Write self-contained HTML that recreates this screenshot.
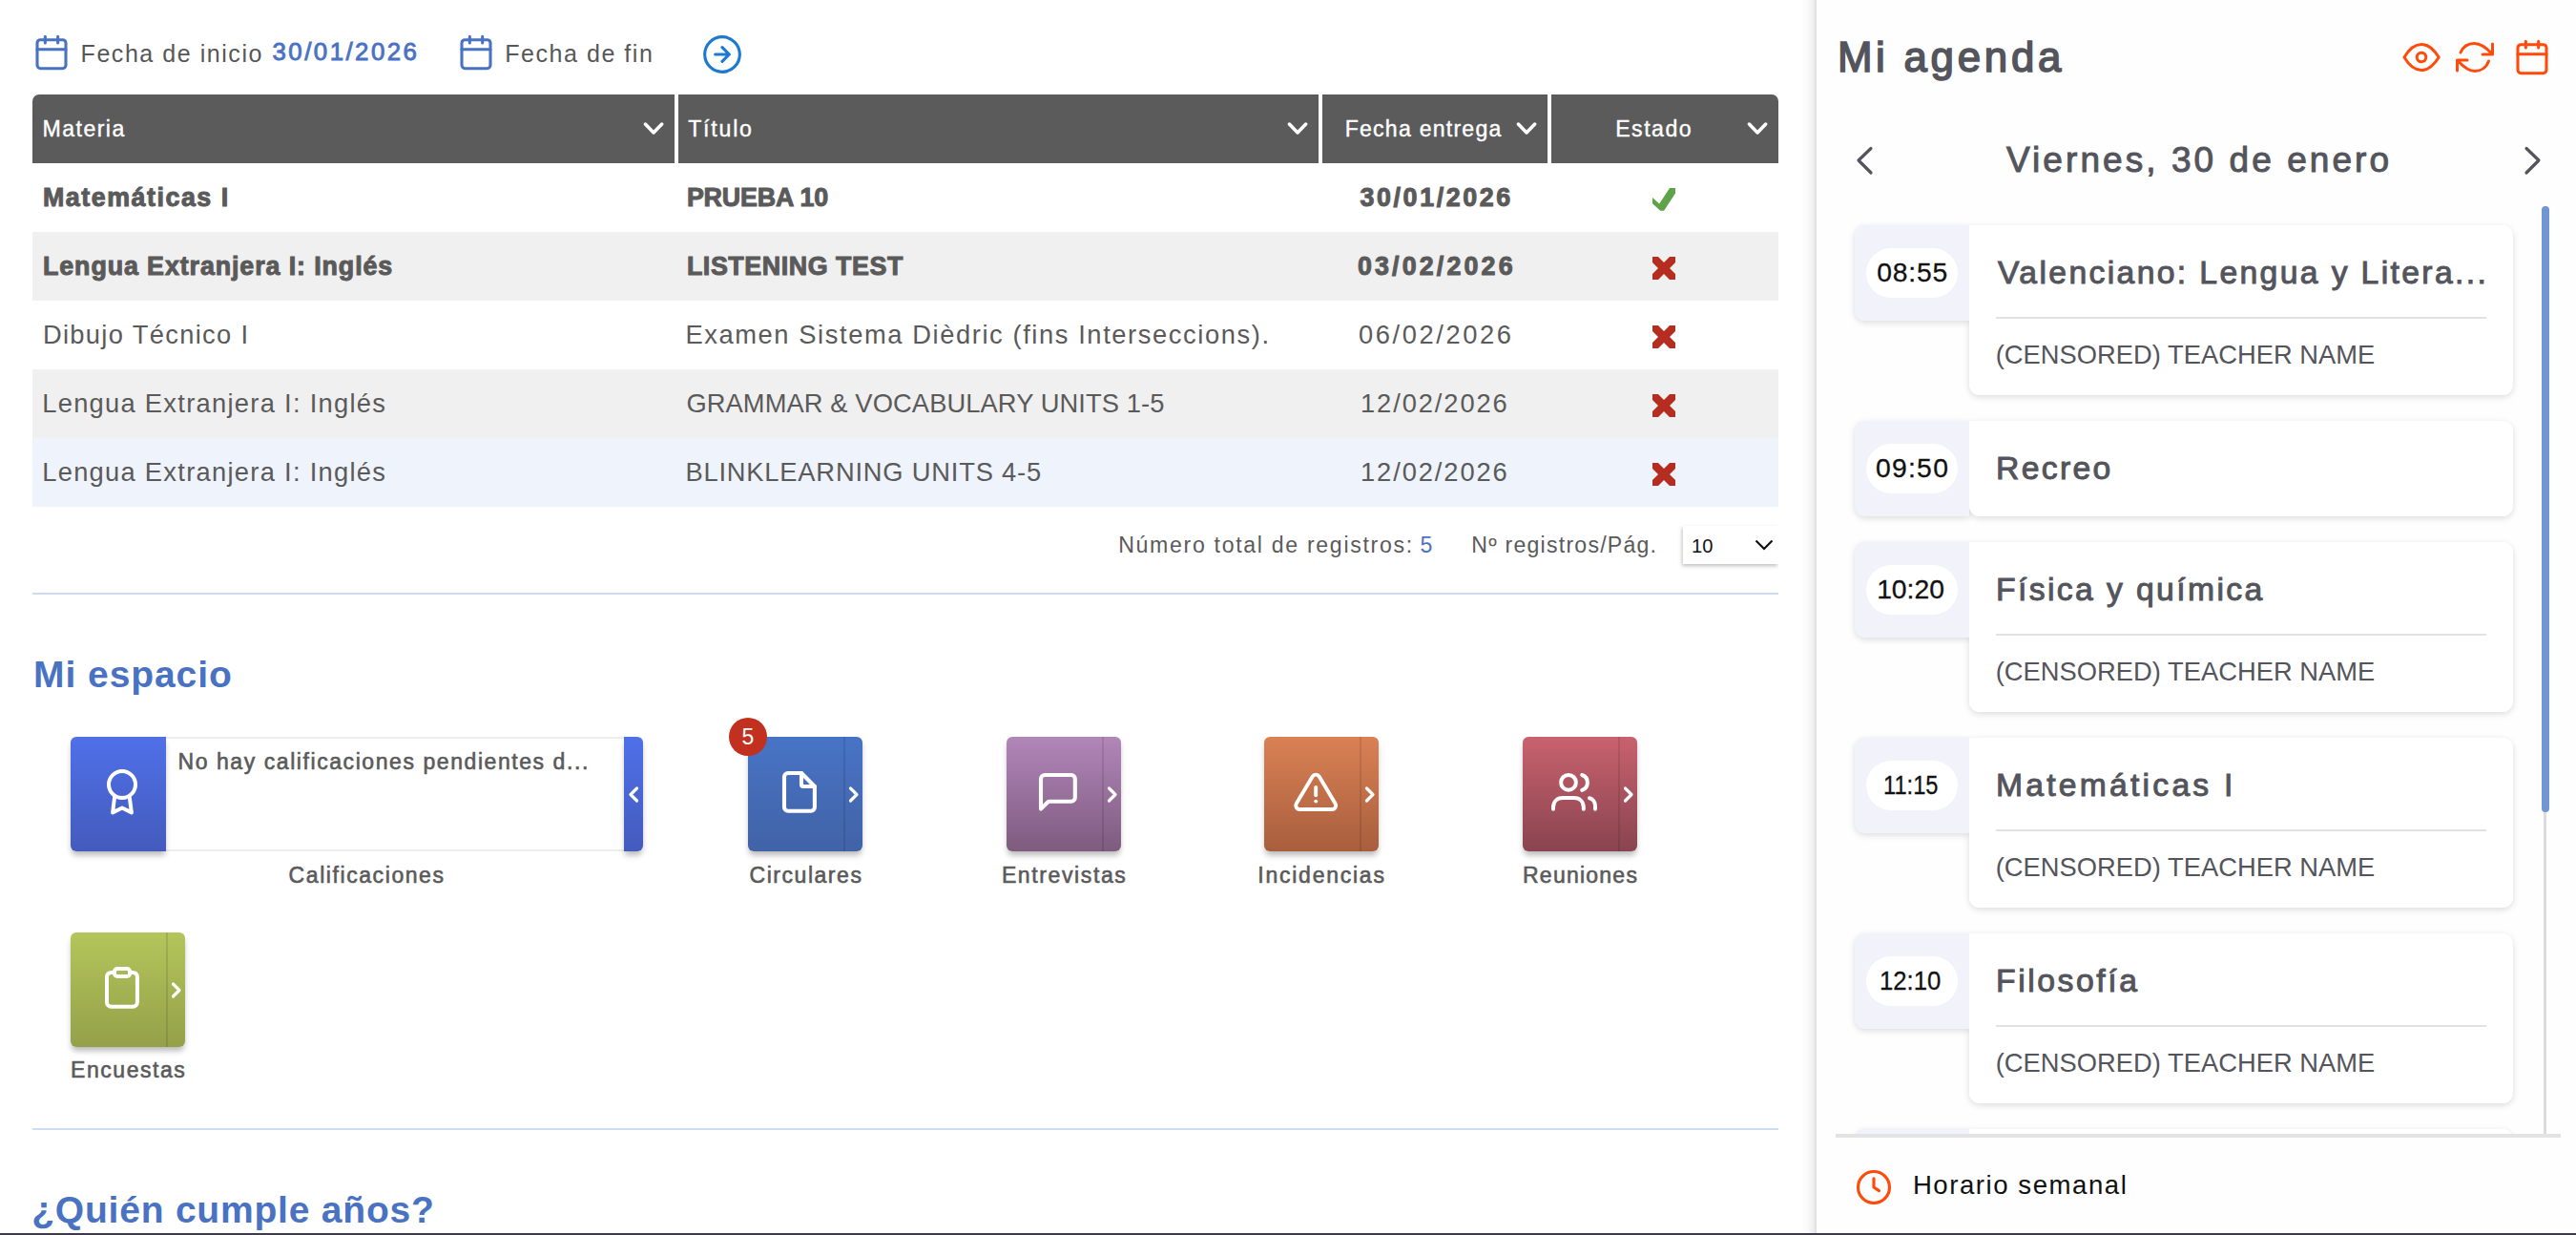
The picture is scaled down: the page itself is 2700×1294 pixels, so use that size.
<!DOCTYPE html>
<html><head><meta charset="utf-8">
<style>
html,body{margin:0;padding:0;}
body{width:2700px;height:1294px;overflow:hidden;position:relative;background:#fff;font-family:"Liberation Sans",sans-serif;}
.a{position:absolute;}
.t{position:absolute;line-height:1;white-space:nowrap;}
svg{position:absolute;overflow:visible;}
.hd{position:absolute;top:99px;height:72px;background:#5b5b5b;}
.row{position:absolute;left:34px;width:1830px;height:72px;}
.tile{position:absolute;width:120px;height:120px;border-radius:6px;box-shadow:0 5px 6px -1px rgba(0,0,0,0.28);overflow:hidden;}
.tile .dv{position:absolute;left:100px;top:0;width:1.5px;height:120px;background:rgba(0,0,0,0.10);}
.card{position:absolute;left:2064px;width:570px;background:#fff;border-radius:0 11px 11px 11px;box-shadow:0 2px 7px rgba(0,0,0,0.14);}
.tbox{position:absolute;left:1944px;width:120px;height:100px;background:#f1f2fa;border-radius:11px 0 0 11px;box-shadow:0 2px 7px rgba(0,0,0,0.14);}
.pill{position:absolute;left:1956px;width:96px;height:52px;background:#fff;border-radius:26px;}
.sep{position:absolute;left:2092px;width:514px;height:2px;background:#e2e2e5;}
</style></head><body>

<!-- top bar icons -->
<svg style="left:34px;top:35px" width="40" height="40" viewBox="0 0 24 24" fill="none" stroke="#4a72c2" stroke-width="1.85" stroke-linecap="round" stroke-linejoin="round"><rect x="3" y="4" width="18" height="18" rx="2"/><path d="M16 2v4M8 2v4M3 10h18"/></svg>
<svg style="left:479px;top:35px" width="40" height="40" viewBox="0 0 24 24" fill="none" stroke="#4a72c2" stroke-width="1.85" stroke-linecap="round" stroke-linejoin="round"><rect x="3" y="4" width="18" height="18" rx="2"/><path d="M16 2v4M8 2v4M3 10h18"/></svg>
<svg style="left:735px;top:35px" width="44" height="44" viewBox="0 0 24 24" fill="none" stroke="#1b7ad0" stroke-width="1.7" stroke-linecap="round" stroke-linejoin="round"><circle cx="12" cy="12" r="10"/><path d="M8 12h8M12 16l4-4-4-4"/></svg>

<!-- table header -->
<div class="hd" style="left:34px;width:673px;border-top-left-radius:7px"></div>
<div class="hd" style="left:711px;width:671px"></div>
<div class="hd" style="left:1386px;width:236px"></div>
<div class="hd" style="left:1626px;width:238px;border-top-right-radius:7px"></div>
<svg style="left:674px;top:126px" width="22" height="16" viewBox="0 0 22 16" fill="none" stroke="#fff" stroke-width="3.6" stroke-linecap="round" stroke-linejoin="round"><path d="M2.4 4.1L11.05 12.9L19.7 4.1"/></svg>
<svg style="left:1348.8px;top:126px" width="22" height="16" viewBox="0 0 22 16" fill="none" stroke="#fff" stroke-width="3.6" stroke-linecap="round" stroke-linejoin="round"><path d="M2.4 4.1L11.05 12.9L19.7 4.1"/></svg>
<svg style="left:1589.1px;top:126px" width="22" height="16" viewBox="0 0 22 16" fill="none" stroke="#fff" stroke-width="3.6" stroke-linecap="round" stroke-linejoin="round"><path d="M2.4 4.1L11.05 12.9L19.7 4.1"/></svg>
<svg style="left:1830.9px;top:126px" width="22" height="16" viewBox="0 0 22 16" fill="none" stroke="#fff" stroke-width="3.6" stroke-linecap="round" stroke-linejoin="round"><path d="M2.4 4.1L11.05 12.9L19.7 4.1"/></svg>

<!-- rows -->
<div class="row" style="top:243px;background:#f0f0f0"></div>
<div class="row" style="top:387px;background:#f0f0f0"></div>
<div class="row" style="top:459px;background:#eef3fc"></div>

<!-- status marks -->
<svg style="left:1728px;top:192px" width="32" height="32" viewBox="0 0 32 32"><path fill="#5fa348" d="M4 15L11.2 21.6L22 4.9H28V10.4L16.1 28.8H12.2L4 21.2Z"/></svg>
<svg style="left:1732px;top:269px" width="24" height="24" viewBox="0 0 24 24"><path fill="#b52d20" d="M0 0H6L12 6L18 0H24V6L18 12L24 18V24H18L12 18L6 24H0V18L6 12L0 6Z"/></svg>
<svg style="left:1732px;top:341px" width="24" height="24" viewBox="0 0 24 24"><path fill="#b52d20" d="M0 0H6L12 6L18 0H24V6L18 12L24 18V24H18L12 18L6 24H0V18L6 12L0 6Z"/></svg>
<svg style="left:1732px;top:413px" width="24" height="24" viewBox="0 0 24 24"><path fill="#b52d20" d="M0 0H6L12 6L18 0H24V6L18 12L24 18V24H18L12 18L6 24H0V18L6 12L0 6Z"/></svg>
<svg style="left:1732px;top:485px" width="24" height="24" viewBox="0 0 24 24"><path fill="#b52d20" d="M0 0H6L12 6L18 0H24V6L18 12L24 18V24H18L12 18L6 24H0V18L6 12L0 6Z"/></svg>

<!-- pagination select -->
<div class="a" style="left:1764px;top:551px;width:100px;height:40px;background:#fff;box-shadow:-1px 2px 4px rgba(0,0,0,0.25)"></div>
<div class="a" style="left:1864px;top:540px;width:30px;height:60px;background:#fff"></div>
<svg style="left:1839px;top:565px" width="20" height="12" viewBox="0 0 20 12" fill="none" stroke="#111" stroke-width="2.2"><path d="M1.5 1.5l8.5 8.5 8.5-8.5"/></svg>

<!-- section lines -->
<div class="a" style="left:34px;top:621px;width:1830px;height:2px;background:#cddcf3"></div>
<div class="a" style="left:34px;top:1182px;width:1830px;height:2px;background:#cddcf3"></div>

<!-- calificaciones widget -->
<div class="a" style="left:174px;top:772px;width:480px;height:116px;border-top:2px solid #eee;border-bottom:2px solid #eee;background:#fff"></div>
<div class="a" style="left:74px;top:772px;width:100px;height:120px;border-radius:6px 0 0 6px;background:linear-gradient(#4f70e7,#445bbd);box-shadow:0 5px 6px -1px rgba(0,0,0,0.28)"></div>
<div class="a" style="left:654px;top:772px;width:20px;height:120px;border-radius:0 6px 6px 0;background:linear-gradient(#4f70e7,#445bbd);box-shadow:0 5px 6px -1px rgba(0,0,0,0.28)"></div>
<svg style="left:74px;top:772px" width="100" height="120" viewBox="0 0 100 120" fill="none" stroke="#fff" stroke-width="4" stroke-linecap="round" stroke-linejoin="round"><circle cx="54" cy="50" r="14"/><path d="M46.1 62.7L44.1 79.4L54 74.5L63.9 79.4L61.7 62.7"/></svg>
<svg style="left:654px;top:772px" width="20" height="120" viewBox="0 0 20 120" fill="none" stroke="#fff" stroke-width="3.2" stroke-linecap="round" stroke-linejoin="round"><path d="M13.5 54l-6.5 6.5 6.5 6.5"/></svg>

<!-- tiles -->
<div class="tile" style="left:784px;top:772px;background:linear-gradient(#4873c5,#4163a7)"><div class="dv"></div></div>
<div class="tile" style="left:1055px;top:772px;background:linear-gradient(#b186b9,#7e5b7f)"><div class="dv"></div></div>
<div class="tile" style="left:1325px;top:772px;background:linear-gradient(#da8155,#a85e3d)"><div class="dv"></div></div>
<div class="tile" style="left:1596px;top:772px;background:linear-gradient(#c8626e,#894450)"><div class="dv"></div></div>
<div class="tile" style="left:74px;top:977px;background:linear-gradient(#b4c55b,#94a149)"><div class="dv"></div></div>
<!-- tile chevrons -->
<svg style="left:784px;top:772px" width="120" height="120" viewBox="0 0 120 120" fill="none" stroke="#fff" stroke-width="3.2" stroke-linecap="round" stroke-linejoin="round"><path d="M107.5 54l6.5 6.5-6.5 6.5"/></svg>
<svg style="left:1055px;top:772px" width="120" height="120" viewBox="0 0 120 120" fill="none" stroke="#fff" stroke-width="3.2" stroke-linecap="round" stroke-linejoin="round"><path d="M107.5 54l6.5 6.5-6.5 6.5"/></svg>
<svg style="left:1325px;top:772px" width="120" height="120" viewBox="0 0 120 120" fill="none" stroke="#fff" stroke-width="3.2" stroke-linecap="round" stroke-linejoin="round"><path d="M107.5 54l6.5 6.5-6.5 6.5"/></svg>
<svg style="left:1596px;top:772px" width="120" height="120" viewBox="0 0 120 120" fill="none" stroke="#fff" stroke-width="3.2" stroke-linecap="round" stroke-linejoin="round"><path d="M107.5 54l6.5 6.5-6.5 6.5"/></svg>
<svg style="left:74px;top:977px" width="120" height="120" viewBox="0 0 120 120" fill="none" stroke="#fff" stroke-width="3.2" stroke-linecap="round" stroke-linejoin="round"><path d="M107.5 54l6.5 6.5-6.5 6.5"/></svg>
<!-- tile icons -->
<svg style="left:810px;top:800px" width="60" height="60" viewBox="0 0 60 60" fill="none" stroke="#fff" stroke-width="4.1" stroke-linecap="round" stroke-linejoin="round"><path d="M30 10H16a4 4 0 0 0-4 4V45.7a4 4 0 0 0 4 4H39.9a4 4 0 0 0 4-4V24L30 10Z"/><path d="M30 10V22a2 2 0 0 0 2 2H43.9"/></svg>
<svg style="left:1080px;top:800px" width="60" height="60" viewBox="0 0 60 60" fill="none" stroke="#fff" stroke-width="4.1" stroke-linecap="round" stroke-linejoin="round"><path d="M11 47.5V16a4 4 0 0 1 4-4H42.8a4 4 0 0 1 4 4V35.8a4 4 0 0 1-4 4H19Z"/></svg>
<svg style="left:1353.8px;top:805.7px" width="50.4" height="50.4" viewBox="0 0 24 24" fill="none" stroke="#fff" stroke-width="1.86" stroke-linecap="round" stroke-linejoin="round"><path d="M12 9v4"/><path d="M10.363 3.591l-8.106 13.534a1.914 1.914 0 0 0 1.636 2.871h16.214a1.914 1.914 0 0 0 1.636-2.87l-8.106-13.536a1.914 1.914 0 0 0-3.274 0z"/><path d="M12 16h.01"/></svg>
<svg style="left:1620px;top:800px" width="60" height="60" viewBox="0 0 60 60" fill="none" stroke="#fff" stroke-width="4" stroke-linecap="round" stroke-linejoin="round"><circle cx="24" cy="19.8" r="7.9"/><path d="M8 47.8V46C8 40 12 36.1 18 36.1H29.8C35.8 36.1 39.8 40 39.8 46V47.8"/><path d="M38.2 12A8.4 8.4 0 0 1 38.2 27.9"/><path d="M46 36.2C49.5 37 52 40.5 52 44.5V47.8"/></svg>
<svg style="left:100px;top:1005px" width="60" height="60" viewBox="0 0 60 60" fill="none" stroke="#fff" stroke-width="4" stroke-linecap="round" stroke-linejoin="round"><path d="M20 13.9H16.5a4.5 4.5 0 0 0-4.5 4.5V45.2a4.5 4.5 0 0 0 4.5 4.5H39.4a4.5 4.5 0 0 0 4.5-4.5V18.4a4.5 4.5 0 0 0-4.5-4.5H36.1"/><rect x="20" y="10" width="16.1" height="7.9" rx="3"/></svg>
<!-- badge -->
<div class="a" style="left:764px;top:752px;width:40px;height:40px;border-radius:20px;background:#c2301f;color:#fff;font-size:23px;line-height:40px;text-align:center">5</div>

<!-- right panel -->
<div class="a" style="left:1888px;top:0;width:16px;height:1292px;background:linear-gradient(90deg,rgba(0,0,0,0),rgba(0,0,0,0.02) 40%,rgba(0,0,0,0.06) 75%,rgba(0,0,0,0.13))"></div>
<div class="a" style="left:1904px;top:0;width:796px;height:1292px;background:#fefefe"></div>
<div class="a" style="left:1903px;top:0;width:1px;height:1292px;background:#dedede"></div>

<!-- agenda header icons -->
<svg style="left:2515px;top:42px" width="46" height="36" viewBox="0 0 46 36" fill="none" stroke="#ff4a0a" stroke-width="3" stroke-linecap="round" stroke-linejoin="round"><path d="M5 18C10 9.5 16 4.5 23 4.5C30 4.5 36 9.5 41.2 18C36 26.5 30 31.5 23 31.5C16 31.5 10 26.5 5 18Z"/><circle cx="23" cy="18" r="4.8"/></svg>
<svg style="left:2573px;top:42px" width="42" height="36" viewBox="0 0 42 36" fill="none" stroke="#ff4a0a" stroke-width="3" stroke-linecap="round" stroke-linejoin="round"><path d="M6 13C9 6 15 3.5 20.5 3.5C27 3.5 32 7 38.5 14"/><path d="M39.5 4V15H29"/><path d="M35.5 22C33 29 27 32.5 21 32.5C14 32.5 9 28 3.5 22"/><path d="M2.5 32V21H13"/></svg>
<svg style="left:2634px;top:40px" width="40" height="40" viewBox="0 0 24 24" fill="none" stroke="#ff4a0a" stroke-width="1.85" stroke-linecap="round" stroke-linejoin="round"><rect x="3" y="4" width="18" height="18" rx="2"/><path d="M16 2v4M8 2v4M3 10h18"/></svg>

<!-- day nav chevrons -->
<svg style="left:1940px;top:150px" width="30" height="36" viewBox="0 0 30 36" fill="none" stroke="#54555c" stroke-width="3.2" stroke-linecap="round" stroke-linejoin="round"><path d="M21 5.5L8 18l13 13"/></svg>
<svg style="left:2640px;top:150px" width="30" height="36" viewBox="0 0 30 36" fill="none" stroke="#54555c" stroke-width="3.2" stroke-linecap="round" stroke-linejoin="round"><path d="M8 5.5L21 18 8 31"/></svg>

<!-- agenda cards -->
<div class="a" style="left:1904px;top:200px;width:796px;height:988px;overflow:hidden">
 <div style="position:absolute;left:-1904px;top:-200px;width:2700px;height:1294px">
  <div class="tbox" style="top:236px"></div><div class="card" style="top:236px;height:178px"></div>
  <div class="tbox" style="top:441px"></div><div class="card" style="top:441px;height:100px"></div>
  <div class="tbox" style="top:568px"></div><div class="card" style="top:568px;height:178px"></div>
  <div class="tbox" style="top:773px"></div><div class="card" style="top:773px;height:178px"></div>
  <div class="tbox" style="top:978px"></div><div class="card" style="top:978px;height:178px"></div>
  <div class="tbox" style="top:1183px"></div><div class="card" style="top:1183px;height:178px"></div>
  <div class="tbox" style="top:236px;box-shadow:none"></div><div class="card" style="top:236px;height:178px;box-shadow:none"></div>
  <div class="pill" style="top:260px"></div>
  <div class="sep" style="top:332px"></div>
  <div class="tbox" style="top:441px;box-shadow:none"></div><div class="card" style="top:441px;height:100px;box-shadow:none"></div>
  <div class="pill" style="top:465px"></div>
  <div class="tbox" style="top:568px;box-shadow:none"></div><div class="card" style="top:568px;height:178px;box-shadow:none"></div>
  <div class="pill" style="top:592px"></div>
  <div class="sep" style="top:664px"></div>
  <div class="tbox" style="top:773px;box-shadow:none"></div><div class="card" style="top:773px;height:178px;box-shadow:none"></div>
  <div class="pill" style="top:797px"></div>
  <div class="sep" style="top:869px"></div>
  <div class="tbox" style="top:978px;box-shadow:none"></div><div class="card" style="top:978px;height:178px;box-shadow:none"></div>
  <div class="pill" style="top:1002px"></div>
  <div class="sep" style="top:1074px"></div>
  <div class="tbox" style="top:1183px;box-shadow:none"></div><div class="card" style="top:1183px;height:178px;box-shadow:none"></div>
 </div>
</div>

<!-- scrollbar -->
<div class="a" style="left:2666px;top:216px;width:3px;height:972px;background:#dcdcdc"></div>
<div class="a" style="left:2664px;top:216px;width:8px;height:635px;border-radius:4px;background:#7296d2"></div>

<!-- bottom of panel -->
<div class="a" style="left:1924px;top:1188px;width:760px;height:4px;background:#e3e3e3"></div>
<svg style="left:1942px;top:1222px" width="44" height="44" viewBox="0 0 24 24" fill="none" stroke="#ff4a0a" stroke-width="1.7" stroke-linecap="round" stroke-linejoin="round"><circle cx="12" cy="12" r="9"/><path d="M12 7v5l3 2"/></svg>

<!-- bottom strip -->
<div class="a" style="left:0;top:1292px;width:2700px;height:2px;background:#3d3a4a"></div>

<div class="t" style="left:84.60px;top:43.54px;font-size:25px;letter-spacing:1.547px;color:#575757;">Fecha de inicio</div>
<div class="t" style="left:285.55px;top:42.36px;font-size:25.8px;letter-spacing:2.471px;color:#4a72c2;-webkit-text-stroke:0.9px #4a72c2;">30/01/2026</div>
<div class="t" style="left:529.20px;top:43.54px;font-size:25px;letter-spacing:1.556px;color:#575757;">Fecha de fin</div>
<div class="t" style="left:44.60px;top:124.45px;font-size:23.1px;letter-spacing:1.440px;color:#fff;-webkit-text-stroke:0.4px #fff;">Materia</div>
<div class="t" style="left:721.20px;top:124.45px;font-size:23.1px;letter-spacing:1.797px;color:#fff;-webkit-text-stroke:0.4px #fff;">Título</div>
<div class="t" style="left:1409.70px;top:124.45px;font-size:23.1px;letter-spacing:1.227px;color:#fff;-webkit-text-stroke:0.4px #fff;">Fecha entrega</div>
<div class="t" style="left:1693.20px;top:124.45px;font-size:23.1px;letter-spacing:1.509px;color:#fff;-webkit-text-stroke:0.4px #fff;">Estado</div>
<div class="t" style="left:45.00px;top:194.01px;font-size:26.8px;letter-spacing:1.541px;color:#5a5a5a;font-weight:bold;-webkit-text-stroke:1.0px #5a5a5a;">Matemáticas I</div>
<div class="t" style="left:45.00px;top:266.01px;font-size:26.8px;letter-spacing:0.912px;color:#5a5a5a;font-weight:bold;-webkit-text-stroke:1.0px #5a5a5a;">Lengua Extranjera I: Inglés</div>
<div class="t" style="left:44.90px;top:336.89px;font-size:27.3px;letter-spacing:1.331px;color:#5a5a5a;">Dibujo Técnico I</div>
<div class="t" style="left:44.20px;top:408.89px;font-size:27.3px;letter-spacing:1.288px;color:#5a5a5a;">Lengua Extranjera I: Inglés</div>
<div class="t" style="left:44.20px;top:480.89px;font-size:27.3px;letter-spacing:1.288px;color:#5a5a5a;">Lengua Extranjera I: Inglés</div>
<div class="t" style="left:719.90px;top:194.01px;font-size:26.8px;letter-spacing:-0.150px;color:#5a5a5a;font-weight:bold;-webkit-text-stroke:1.0px #5a5a5a;">PRUEBA 10</div>
<div class="t" style="left:719.90px;top:266.01px;font-size:26.8px;letter-spacing:0.586px;color:#5a5a5a;font-weight:bold;-webkit-text-stroke:1.0px #5a5a5a;">LISTENING TEST</div>
<div class="t" style="left:718.40px;top:336.89px;font-size:27.3px;letter-spacing:1.593px;color:#5a5a5a;">Examen Sistema Dièdric (fins Interseccions).</div>
<div class="t" style="left:719.40px;top:408.89px;font-size:27.3px;letter-spacing:0.105px;color:#5a5a5a;">GRAMMAR &amp; VOCABULARY UNITS 1-5</div>
<div class="t" style="left:718.40px;top:480.89px;font-size:27.3px;letter-spacing:0.810px;color:#5a5a5a;">BLINKLEARNING UNITS 4-5</div>
<div class="t" style="left:1425.50px;top:194.01px;font-size:26.8px;letter-spacing:2.621px;color:#5a5a5a;font-weight:bold;-webkit-text-stroke:1.0px #5a5a5a;">30/01/2026</div>
<div class="t" style="left:1422.90px;top:266.01px;font-size:26.8px;letter-spacing:3.176px;color:#5a5a5a;font-weight:bold;-webkit-text-stroke:1.0px #5a5a5a;">03/02/2026</div>
<div class="t" style="left:1424.00px;top:336.89px;font-size:27.3px;letter-spacing:2.596px;color:#5a5a5a;">06/02/2026</div>
<div class="t" style="left:1426.00px;top:408.89px;font-size:27.3px;letter-spacing:1.907px;color:#5a5a5a;">12/02/2026</div>
<div class="t" style="left:1426.00px;top:480.89px;font-size:27.3px;letter-spacing:1.907px;color:#5a5a5a;">12/02/2026</div>
<div class="t" style="left:1172.20px;top:559.75px;font-size:23.1px;letter-spacing:1.689px;color:#5a5a5a;">Número total de registros:</div>
<div class="t" style="left:1488.60px;top:559.75px;font-size:23.1px;letter-spacing:0.000px;color:#4a72c2;">5</div>
<div class="t" style="left:1542.30px;top:559.75px;font-size:23.1px;letter-spacing:1.232px;color:#5a5a5a;">Nº registros/Pág.</div>
<div class="t" style="left:1773.14px;top:561.02px;font-size:21px;letter-spacing:0.000px;color:#111;transform:scaleX(0.9594);transform-origin:0 0;">10</div>
<div class="t" style="left:35.10px;top:686.99px;font-size:39px;letter-spacing:0.925px;color:#4a72c2;font-weight:bold;">Mi espacio</div>
<div class="t" style="left:186.50px;top:786.63px;font-size:23px;letter-spacing:1.568px;color:#5a5a5a;-webkit-text-stroke:0.6px #5a5a5a;">No hay calificaciones pendientes d...</div>
<div class="t" style="left:302.60px;top:905.53px;font-size:23px;letter-spacing:1.577px;color:#5a5a5a;-webkit-text-stroke:0.6px #5a5a5a;">Calificaciones</div>
<div class="t" style="left:785.50px;top:905.53px;font-size:23px;letter-spacing:1.542px;color:#5a5a5a;-webkit-text-stroke:0.6px #5a5a5a;">Circulares</div>
<div class="t" style="left:1049.90px;top:905.53px;font-size:23px;letter-spacing:1.614px;color:#5a5a5a;-webkit-text-stroke:0.6px #5a5a5a;">Entrevistas</div>
<div class="t" style="left:1318.30px;top:905.53px;font-size:23px;letter-spacing:1.753px;color:#5a5a5a;-webkit-text-stroke:0.6px #5a5a5a;">Incidencias</div>
<div class="t" style="left:1596.00px;top:905.53px;font-size:23px;letter-spacing:1.241px;color:#5a5a5a;-webkit-text-stroke:0.6px #5a5a5a;">Reuniones</div>
<div class="t" style="left:74.10px;top:1110.03px;font-size:23px;letter-spacing:1.538px;color:#5a5a5a;-webkit-text-stroke:0.6px #5a5a5a;">Encuestas</div>
<div class="t" style="left:33.20px;top:1247.89px;font-size:39px;letter-spacing:0.791px;color:#4a72c2;font-weight:bold;">¿Quién cumple años?</div>
<div class="t" style="left:1925.90px;top:37.82px;font-size:43.8px;letter-spacing:3.741px;color:#54555c;-webkit-text-stroke:1.6px #54555c;">Mi agenda</div>
<div class="t" style="left:2103.00px;top:149.18px;font-size:37px;letter-spacing:3.065px;color:#54555c;-webkit-text-stroke:1.0px #54555c;">Viernes, 30 de enero</div>
<div class="t" style="left:1967.15px;top:271.34px;font-size:28.3px;letter-spacing:0.807px;color:#111;-webkit-text-stroke:0.3px #111;">08:55</div>
<div class="t" style="left:2094.00px;top:269.47px;font-size:33.7px;letter-spacing:2.366px;color:#54555c;-webkit-text-stroke:1.0px #54555c;">Valenciano: Lengua y Litera...</div>
<div class="t" style="left:2091.70px;top:357.89px;font-size:27.3px;letter-spacing:0.030px;color:#54555c;">(CENSORED) TEACHER NAME</div>
<div class="t" style="left:1965.95px;top:476.34px;font-size:28.3px;letter-spacing:1.282px;color:#111;-webkit-text-stroke:0.3px #111;">09:50</div>
<div class="t" style="left:2092.00px;top:474.47px;font-size:33.7px;letter-spacing:2.348px;color:#54555c;-webkit-text-stroke:1.0px #54555c;">Recreo</div>
<div class="t" style="left:1967.15px;top:603.34px;font-size:28.3px;letter-spacing:-0.018px;color:#111;-webkit-text-stroke:0.3px #111;">10:20</div>
<div class="t" style="left:2092.00px;top:601.47px;font-size:33.7px;letter-spacing:2.392px;color:#54555c;-webkit-text-stroke:1.0px #54555c;">Física y química</div>
<div class="t" style="left:2091.70px;top:689.89px;font-size:27.3px;letter-spacing:0.030px;color:#54555c;">(CENSORED) TEACHER NAME</div>
<div class="t" style="left:1973.98px;top:808.34px;font-size:28.3px;letter-spacing:0.000px;color:#111;transform:scaleX(0.8367);transform-origin:0 0;-webkit-text-stroke:0.3px #111;">11:15</div>
<div class="t" style="left:2092.00px;top:806.47px;font-size:33.7px;letter-spacing:3.224px;color:#54555c;-webkit-text-stroke:1.0px #54555c;">Matemáticas I</div>
<div class="t" style="left:2091.70px;top:894.89px;font-size:27.3px;letter-spacing:0.030px;color:#54555c;">(CENSORED) TEACHER NAME</div>
<div class="t" style="left:1970.33px;top:1013.34px;font-size:28.3px;letter-spacing:0.000px;color:#111;transform:scaleX(0.9093);transform-origin:0 0;-webkit-text-stroke:0.3px #111;">12:10</div>
<div class="t" style="left:2092.00px;top:1011.47px;font-size:33.7px;letter-spacing:2.578px;color:#54555c;-webkit-text-stroke:1.0px #54555c;">Filosofía</div>
<div class="t" style="left:2091.70px;top:1099.89px;font-size:27.3px;letter-spacing:0.030px;color:#54555c;">(CENSORED) TEACHER NAME</div>
<div class="t" style="left:2004.90px;top:1227.54px;font-size:27.6px;letter-spacing:1.535px;color:#111;">Horario semanal</div>
</body></html>
